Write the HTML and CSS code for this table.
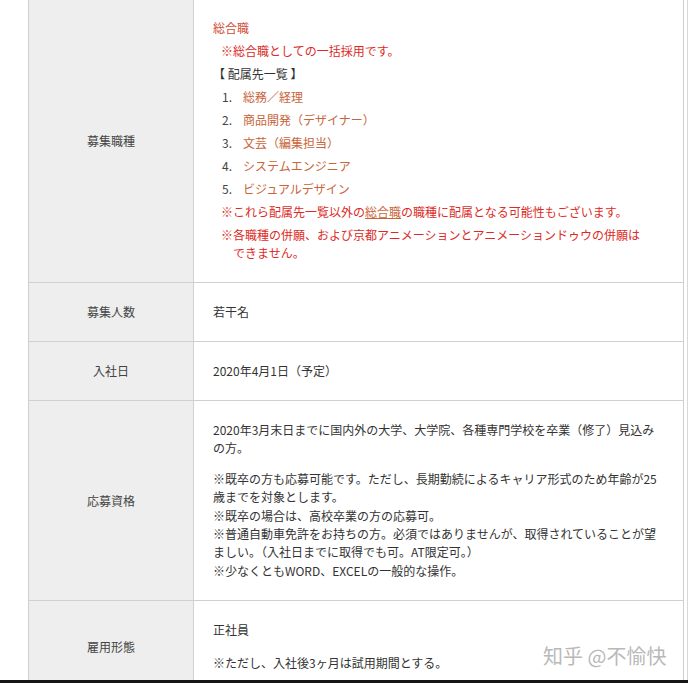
FILE: index.html
```html
<!DOCTYPE html>
<html lang="ja">
<head>
  <meta charset="UTF-8">
  <title>募集要項</title>
  <link rel="stylesheet" href="styles.css">
</head>
<body>
  <div class="page">
    <div class="recruit-table">

      <div class="row row-first">
        <div class="label">募集職種</div>
        <div class="value">
          <p class="job-title">総合職</p>
          <p class="note-red indent">※総合職としての一括採用です。</p>
          <p class="line">【 配属先一覧 】</p>
          <ol class="dept-list">
            <li><span class="num">1.</span><a class="link">総務／経理</a></li>
            <li><span class="num">2.</span><a class="link">商品開発（デザイナー）</a></li>
            <li><span class="num">3.</span><a class="link">文芸（編集担当）</a></li>
            <li><span class="num">4.</span><a class="link">システムエンジニア</a></li>
            <li><span class="num">5.</span><a class="link">ビジュアルデザイン</a></li>
          </ol>
          <p class="note-red hang">※これら配属先一覧以外の<a class="link underline">総合職</a>の職種に配属となる可能性もございます。</p>
          <p class="note-red hang last">※各職種の併願、および京都アニメーションとアニメーションドゥウの併願は<br>できません。</p>
        </div>
      </div>

      <div class="row">
        <div class="label">募集人数</div>
        <div class="value"><p class="line">若干名</p></div>
      </div>

      <div class="row">
        <div class="label">入社日</div>
        <div class="value"><p class="line">2020年4月1日（予定）</p></div>
      </div>

      <div class="row">
        <div class="label">応募資格</div>
        <div class="value text-block">
          <p>2020年3月末日までに国内外の大学、大学院、各種専門学校を卒業（修了）見込みの方。</p>
          <p>※既卒の方も応募可能です。ただし、長期勤続によるキャリア形式のため年齢が25歳までを対象とします。<br>
          ※既卒の場合は、高校卒業の方の応募可。<br>
          ※普通自動車免許をお持ちの方。必須ではありませんが、取得されていることが望ましい。（入社日までに取得でも可。AT限定可。）<br>
          ※少なくともWORD、EXCELの一般的な操作。</p>
        </div>
      </div>

      <div class="row">
        <div class="label">雇用形態</div>
        <div class="value text-block spaced">
          <p>正社員</p>
          <p>※ただし、入社後3ヶ月は試用期間とする。</p>
        </div>
      </div>

    </div>

    <div class="watermark">知乎 @不愉快</div>
  </div>
  <div class="bottom-bar"></div>
</body>
</html>
```

FILE: styles.css
```css
* {
  box-sizing: border-box;
  margin: 0;
  padding: 0;
}

body {
  font-family: "Noto Sans CJK JP", "Noto Sans", sans-serif;
  font-size: 12px;
  color: #333;
  background: #fff;
  overflow: hidden;
}

.page {
  position: relative;
  width: 688px;
  min-height: 100vh;
  border-right: 1px solid #d8d8d8;
  padding-left: 28px;
}

.recruit-table {
  width: 656px;
  border-left: 1px solid #d0d0d0;
  border-right: 1px solid #d0d0d0;
}

.row {
  display: grid;
  grid-template-columns: 165px 1fr;
  border-top: 1px solid #d0d0d0;
}

.row-first {
  border-top: none;
}

.label {
  background: #eeeeee;
  border-right: 1px solid #d0d0d0;
  display: flex;
  align-items: center;
  justify-content: center;
  color: #444;
  line-height: 18px;
}

.value {
  padding: 20px 19px;
  line-height: 18px;
}

.row-first .value {
  padding-top: 19px;
}

.value p,
.dept-list li {
  margin-bottom: 5px;
}

.value p.last,
.row .value p:last-child {
  margin-bottom: 0;
}

.job-title {
  color: #cf4b36;
}

.note-red {
  color: #dc2b26;
}

.indent {
  padding-left: 8px;
}

.hang {
  padding-left: 20px;
  text-indent: -12px;
}

.dept-list {
  list-style: none;
}

.num {
  display: inline-block;
  width: 21px;
  margin-left: 9px;
  color: #444;
}

.link {
  color: #c8653a;
  text-decoration: none;
}

.underline {
  text-decoration: underline;
}

.text-block {
  line-height: 18.4px;
}

.text-block p {
  margin-bottom: 12px;
}

.spaced p {
  margin-bottom: 14px;
}

.watermark {
  position: absolute;
  left: 543px;
  top: 642px;
  font-family: "Noto Sans CJK SC", sans-serif;
  font-size: 20px;
  line-height: 28px;
  color: #b9b9b9;
  text-shadow: 0 0 1px #fff;
  white-space: nowrap;
}

.bottom-bar {
  position: fixed;
  left: 0;
  right: 0;
  bottom: 0;
  height: 3px;
  background: #151515;
}
```
